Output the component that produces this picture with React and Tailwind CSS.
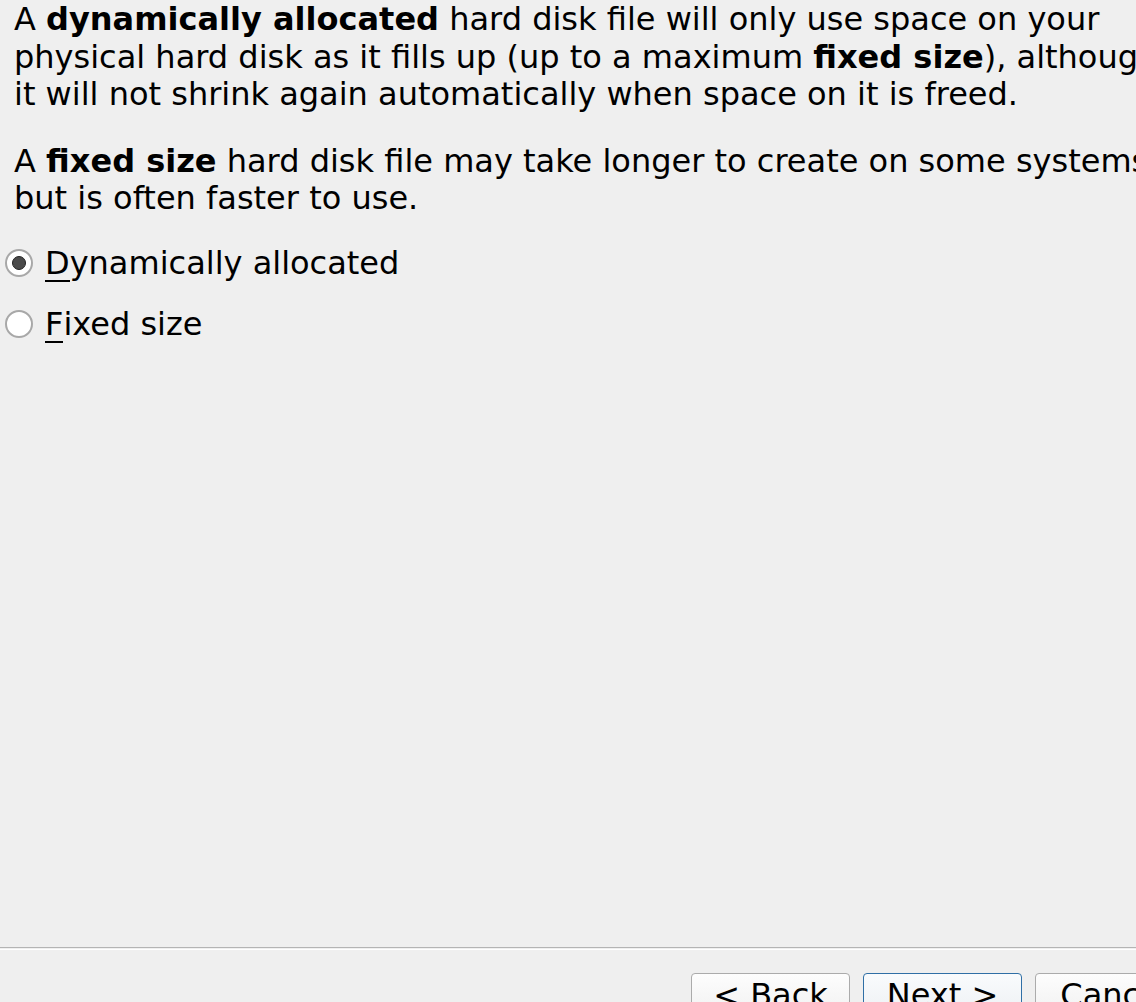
import React from "react";

function Mn({ children }) {
  return (
    <span className="relative inline-block">
      {children}
      <span className="absolute left-0 right-0 bottom-[-5px] h-[2px] bg-black" />
    </span>
  );
}

function Radio({ checked }) {
  return (
    <span className="flex h-[28px] w-[28px] shrink-0 items-center justify-center rounded-full border-2 border-[#a8a8a8] bg-white">
      {checked && <span className="h-[14px] w-[14px] rounded-full border border-[#222] bg-[#4a4a4a]" />}
    </span>
  );
}

export default function App() {
  return (
    <div
      className="relative h-[1002px] w-[1136px] overflow-hidden bg-[#efefef] text-black"
      style={{ fontFamily: '"DejaVu Sans", sans-serif' }}
    >
      <div className="whitespace-nowrap pl-[14px] pt-[1px] text-[32px] leading-[37.5px]">
        <p className="m-0">
          A <b>dynamically allocated</b> hard disk file will only use space on your
          <br />
          physical hard disk as it fills up (up to a maximum <b>fixed size</b>), although
          <br />
          it will not shrink again automatically when space on it is freed.
        </p>
        <p className="m-0 mt-[29px]">
          A <b>fixed size</b> hard disk file may take longer to create on some systems
          <br />
          but is often faster to use.
        </p>
      </div>
      <div className="mt-[31px] flex flex-col gap-[33px] pl-[5px] text-[32px] leading-[28px]">
        <label className="flex items-center gap-[12px]">
          <Radio checked />
          <span>
            <Mn>D</Mn>ynamically allocated
          </span>
        </label>
        <label className="flex items-center gap-[12px]">
          <Radio />
          <span>
            <Mn>F</Mn>ixed size
          </span>
        </label>
      </div>
      <div className="absolute left-0 right-0 top-[947px] h-[1px] bg-[#b4b4b4]" />
      <div className="absolute left-0 right-0 top-[949px] h-[1px] bg-white" />
      <div className="absolute left-[691px] top-[973px] flex gap-[13px] whitespace-nowrap text-[32px]">
        <div className="flex h-[50px] w-[159px] justify-center rounded-[4px] border border-[#ababab] bg-gradient-to-b from-[#fdfdfd] to-[#efefef] pt-[4px] leading-[34px]">
          &lt; Back
        </div>
        <div className="flex h-[50px] w-[159px] justify-center rounded-[4px] border border-[#2f6fa6] bg-gradient-to-b from-[#f9fbfd] to-[#eceff2] pt-[4px] leading-[34px]">
          Next &gt;
        </div>
        <div className="flex h-[50px] w-[159px] justify-center rounded-[4px] border border-[#ababab] bg-gradient-to-b from-[#fdfdfd] to-[#efefef] pt-[4px] leading-[34px]">
          Cancel
        </div>
      </div>
    </div>
  );
}
